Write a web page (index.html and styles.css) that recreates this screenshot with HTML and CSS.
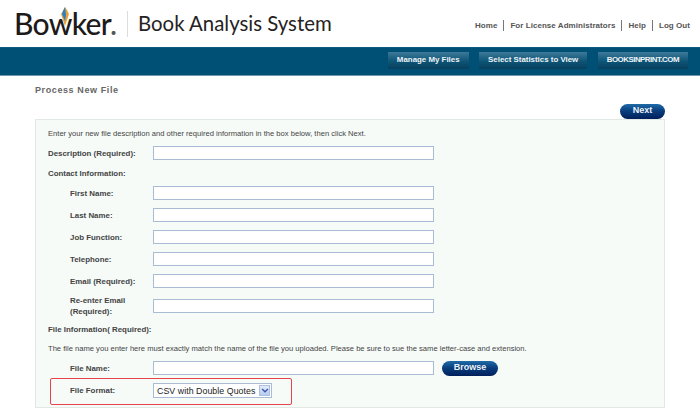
FILE: index.html
```html
<!DOCTYPE html>
<html lang="en">
<head>
<meta charset="utf-8">
<title>Book Analysis System</title>
<link rel="stylesheet" href="styles.css">
</head>
<body>
<header class="top">
  <div class="brand">
    <span class="logo">Bo<span class="logo-w">w<svg class="gem" viewBox="0 0 10 20" width="10" height="20"><path d="M1 7 L5 19 L9 7 L7 3 L5 0 L3 4 Z" fill="#e8a23a"/><path d="M3 4 L5 0 L6 8 L5 14 L2 7 Z" fill="#2f7fc0"/></svg></span>ker<span class="logo-dot">.</span></span>
    <span class="divider"></span>
    <span class="product">Book Analysis System</span>
  </div>
  <nav class="links">
    <a>Home</a><a>For License Administrators</a><a>Help</a><a>Log Out</a>
  </nav>
</header>
<div class="bar">
  <a class="tab">Manage My Files</a>
  <a class="tab">Select Statistics to View</a>
  <a class="tab tab-caps">BOOKSINPRINT.COM</a>
</div>
<main class="page">
  <h1 class="title">Process New File</h1>
  <div class="actions"><a class="pill pill-next">Next</a></div>
  <section class="box">
    <p class="note">Enter your new file description and other required information in the box below, then click Next.</p>
    <div class="field field-top"><label>Description (Required):</label><span class="input"></span></div>
    <p class="head">Contact Information:</p>
    <div class="field sub"><label>First Name:</label><span class="input"></span></div>
    <div class="field sub"><label>Last Name:</label><span class="input"></span></div>
    <div class="field sub"><label>Job Function:</label><span class="input"></span></div>
    <div class="field sub"><label>Telephone:</label><span class="input"></span></div>
    <div class="field sub"><label>Email (Required):</label><span class="input"></span></div>
    <div class="field sub tall"><label>Re-enter Email (Required):</label><span class="input"></span></div>
    <p class="head head-file">File Information( Required):</p>
    <p class="note note-file">The file name you enter here must exactly match the name of the file you uploaded. Please be sure to sue the same letter-case and extension.</p>
    <div class="field sub"><label>File Name:</label><span class="input"></span><a class="pill pill-browse">Browse</a></div>
    <div class="field sub format">
      <label>File Format:</label>
      <span class="select">CSV with Double Quotes<span class="arrow"><svg viewBox="0 0 9 6" width="8" height="5"><path d="M1 1.2 L4.5 4.6 L8 1.2" fill="none" stroke="#3a55a5" stroke-width="1.6"/></svg></span></span>
    </div>
  </section>
</main>
</body>
</html>
```

FILE: styles.css
```css
* { box-sizing: border-box; }
html, body { margin: 0; padding: 0; }
body {
  width: 700px;
  height: 413px;
  overflow: hidden;
  background: #fff;
  font-family: "Liberation Sans", Arial, sans-serif;
  font-size: 9px;
  color: #444;
}
.top {
  height: 47px;
  display: flex;
  justify-content: space-between;
  padding: 10px 0 0 14px;
}
.brand { display: flex; align-items: flex-start; }
.logo {
  width: 104px;
  font-family: Lato, "Open Sans", sans-serif;
  font-weight: 500;
  font-size: 30px;
  line-height: 27px;
  letter-spacing: -0.7px;
  color: #1d1a1a;
  white-space: nowrap;
}
.logo-w { position: relative; }
.gem { position: absolute; left: 11px; top: 2px; }
.logo-dot { color: #555; }
.divider {
  width: 1px;
  height: 26px;
  margin: 1px 10px 0 9px;
  background: #dcdcdc;
}
.product {
  font-family: Lato, "Open Sans", sans-serif;
  font-size: 20.4px;
  line-height: 26px;
  color: #262222;
  white-space: nowrap;
}
.links {
  display: flex;
  align-items: center;
  height: 11px;
  margin: 10px 10px 0 0;
  font-weight: bold;
  font-size: 8px;
  letter-spacing: 0.05px;
  color: #555;
}
.links a { padding: 0 6px; border-left: 1px solid #777; line-height: 11px; }
.links a:first-child { border-left: 0; }
.links a:last-child { padding-right: 0; }
.bar {
  height: 29px;
  display: flex;
  justify-content: flex-end;
  gap: 10.5px;
  padding: 4px 12px 0 0;
  background: #004f74;
  border-bottom: 1px solid #6f9bb2;
  border-top: 1px solid #0b5c80;
}
.tab {
  height: 17px;
  padding: 0 9px;
  background: linear-gradient(#3d7899, #0d5576 55%, #083f5e);
  color: #eef3f6;
  font-weight: bold;
  font-size: 7.9px;
  line-height: 15px;
  white-space: nowrap;
}
.tab-caps { letter-spacing: -0.5px; }
.page { padding: 0 35px; }
.title {
  margin: 8px 0 0;
  font-size: 9px;
  line-height: 12px;
  font-weight: bold;
  letter-spacing: 0.6px;
  color: #666;
}
.actions { display: flex; justify-content: flex-end; margin-top: 8px; height: 15px; }
.pill {
  display: block;
  border-radius: 8px;
  background: linear-gradient(#1f6ba8, #0a3f7e 45%, #001f5c);
  color: #eef2f7;
  font-weight: bold;
  text-align: center;
}
.pill-next { width: 45px; height: 15px; font-size: 9px; line-height: 13px; }
.box {
  height: 289px;
  padding: 9px 12px 0;
  background: #f6fbf8;
  border: 1px solid #e2e9e5;
}
.note { margin: 0; font-size: 7.6px; line-height: 10px; color: #444; white-space: nowrap; }
.head { margin: 8px 0 0; font-weight: bold; font-size: 7.9px; line-height: 11px; color: #444; }
.field { display: flex; align-items: center; margin-top: 8px; height: 14px; font-weight: bold; font-size: 7.9px; color: #444; }
.field-top { margin-top: 7px; }
.field label { width: 105px; line-height: 11px; }
.head + .sub { margin-top: 7px; }
.sub label { width: 83px; margin-left: 22px; }
.tall { margin-top: 11px; }
.input {
  display: block;
  width: 281px;
  height: 14px;
  background: #fff;
  border: 1px solid #a9bcd4;
}
.head-file { margin-top: 11px; }
.note-file { margin-top: 9px; }
.note-file + .field { margin-top: 7px; }
.pill-browse { width: 56px; height: 15px; margin-left: 8px; font-size: 9px; line-height: 13px; }
.format {
  position: relative;
  height: 15px;
  margin-top: 8px;
}
.format::before {
  content: "";
  position: absolute;
  left: 2px;
  top: -5px;
  width: 240px;
  height: 25px;
  border: 1px solid #e8434b;
  border-radius: 2px;
}
.select {
  display: flex;
  align-items: center;
  justify-content: space-between;
  width: 119px;
  height: 15px;
  padding: 0 1px 0 3px;
  background: #fff;
  border: 1px solid #a9bcd4;
  font-family: "Liberation Sans", Arial, sans-serif;
  font-weight: normal;
  font-size: 8.8px;
  letter-spacing: 0.05px;
  color: #222;
  white-space: nowrap;
}
.arrow {
  display: flex;
  align-items: center;
  justify-content: center;
  width: 11px;
  height: 11px;
  background: linear-gradient(#e4ecf9, #b7cbef);
  border: 1px solid #a9bfe6;
}
```
